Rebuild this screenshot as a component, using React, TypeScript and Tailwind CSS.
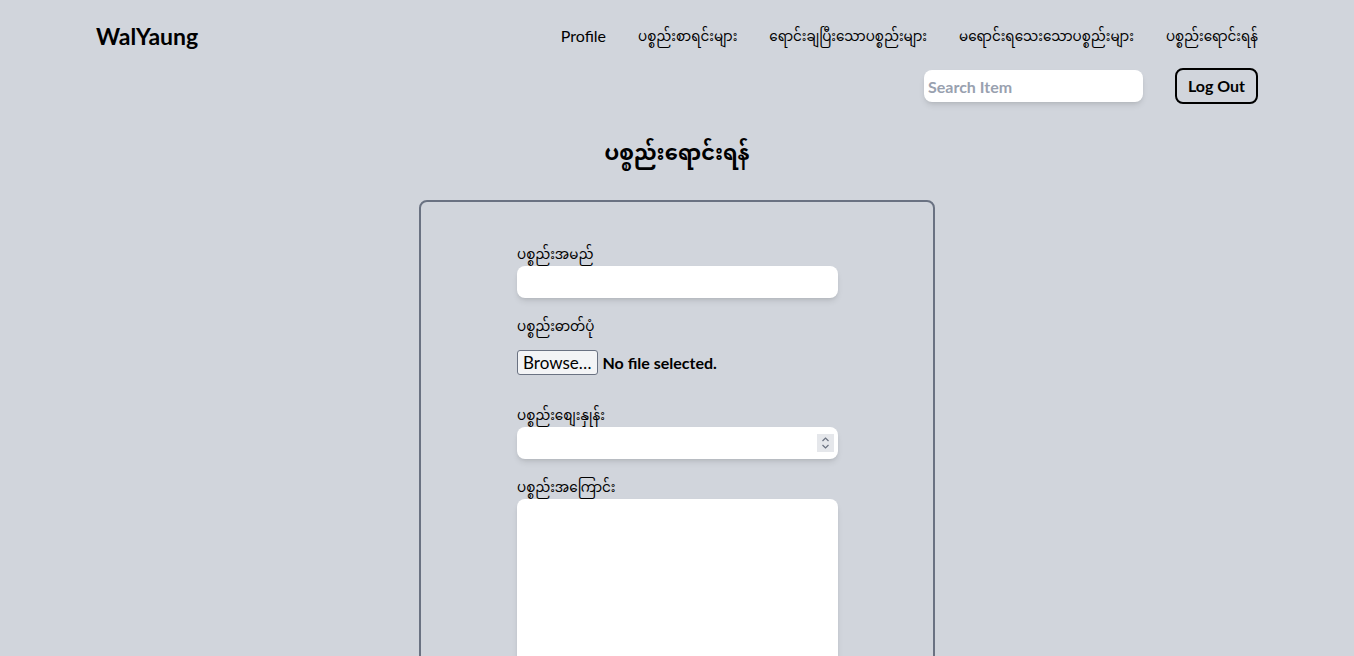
import React, { useState } from 'react';

const latin = "font-['Lato','Noto_Sans','Noto_Sans_Myanmar',sans-serif]";

const navLinks = [
  { label: 'Profile', mm: false },
  { label: 'ပစ္စည်းစာရင်းများ', mm: true },
  { label: 'ရောင်းချပြီးသောပစ္စည်းများ', mm: true },
  { label: 'မရောင်းရသေးသောပစ္စည်းများ', mm: true },
  { label: 'ပစ္စည်းရောင်းရန်', mm: true },
];

function Header() {
  return (
    <header className="px-24 pt-5">
      <div className="flex h-8 items-center justify-between">
        <h1 className="text-[23px] font-bold leading-8 text-black">WalYaung</h1>
        <nav className="flex items-center gap-8">
          {navLinks.map((link) => (
            <a
              key={link.label}
              href="#"
              className={`leading-6 text-black ${link.mm ? 'text-[13.5px]' : 'text-base'}`}
            >
              {link.label}
            </a>
          ))}
        </nav>
      </div>
      <div className="mt-4 flex items-center justify-end gap-8">
        <input
          type="text"
          placeholder="Search Item"
          className="h-8 w-[219px] rounded-lg bg-white px-1 text-base font-bold shadow-md outline-none placeholder:text-gray-400"
        />
        <button
          type="button"
          className="h-9 w-[83px] rounded-lg border-2 border-black text-base font-bold text-black"
        >
          Log Out
        </button>
      </div>
    </header>
  );
}

function FieldLabel({ children, className = '' }: { children: React.ReactNode; className?: string }) {
  return <label className={`block h-6 text-[13.5px] leading-6 text-black ${className}`}>{children}</label>;
}

function SellForm() {
  const [price, setPrice] = useState('');

  return (
    <div className="mx-auto mt-[32px] w-[516px] rounded-lg border-2 border-gray-500 pb-10 pt-[40px]">
      <form className="ml-[96px] w-[321px]">
        <FieldLabel>ပစ္စည်းအမည်</FieldLabel>
        <input type="text" className="block h-8 w-full rounded-lg bg-white px-2 shadow-md outline-none" />

        <FieldLabel className="mt-4">ပစ္စည်းဓာတ်ပုံ</FieldLabel>
        <div className="mt-3 flex h-[25px] items-center">
          <span className="flex h-[25px] items-center rounded-[3px] border border-gray-500 bg-gray-100 px-[5px] text-[17px] text-black">
            Browse…
          </span>
          <span className="ml-[5px] text-base font-bold text-black">No file selected.</span>
          <input type="file" className="sr-only" />
        </div>

        <FieldLabel className="mt-7">ပစ္စည်းစျေးနှုန်း</FieldLabel>
        <div className="relative">
          <input
            type="number"
            value={price}
            onChange={(e) => setPrice(e.target.value)}
            className="block h-8 w-full rounded-lg bg-white px-2 shadow-md outline-none [appearance:textfield] [&::-webkit-inner-spin-button]:appearance-none [&::-webkit-outer-spin-button]:appearance-none"
          />
          <div className="pointer-events-none absolute right-[4px] top-[7px] flex h-[18px] w-[17px] flex-col items-center justify-center bg-gray-200">
            <svg width="9" height="14" viewBox="0 0 9 14" fill="none" stroke="#6b7280" strokeWidth="1.2">
              <path d="M1.5 5 L4.5 2 L7.5 5" />
              <path d="M1.5 9 L4.5 12 L7.5 9" />
            </svg>
          </div>
        </div>

        <FieldLabel className="mt-4">ပစ္စည်းအကြောင်း</FieldLabel>
        <textarea className="block h-[220px] w-full resize-none rounded-lg bg-white p-2 shadow-md outline-none" />
      </form>
    </div>
  );
}

export default function App() {
  return (
    <div className={`min-h-screen bg-gray-300 pb-10 ${latin}`}>
      <Header />
      <h2 className="mt-[32px] text-center text-[21px] font-bold leading-8 text-black">ပစ္စည်းရောင်းရန်</h2>
      <SellForm />
    </div>
  );
}
